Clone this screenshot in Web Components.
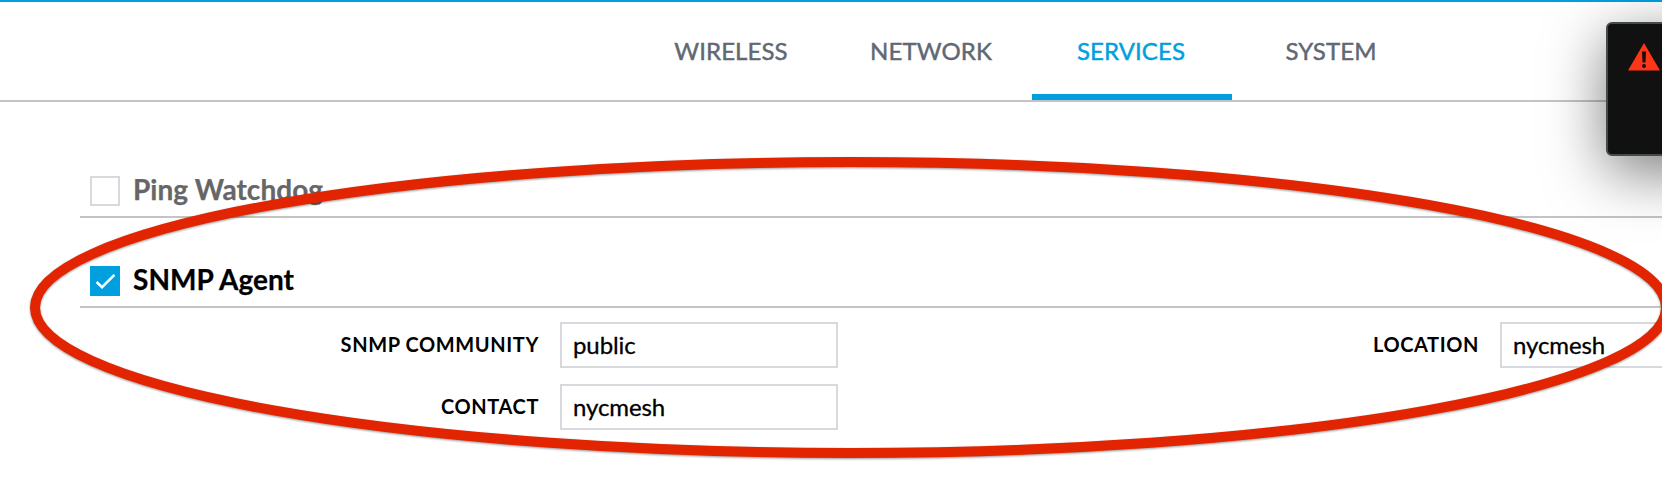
<!DOCTYPE html>
<html lang="en">
<head>
<meta charset="utf-8">
<title>Services</title>
<style>
html,body{margin:0;height:100%;overflow:hidden;background:#fff}
body{font-family:Lato,"Liberation Sans",sans-serif}
</style>
</head>
<body>
<services-page></services-page>
<script>
const define = (name, html) => {
  const t = document.createElement('template');
  t.innerHTML = html;
  customElements.define(name, class extends HTMLElement {
    constructor() {
      super();
      this.attachShadow({mode: 'open'}).appendChild(t.content.cloneNode(true));
    }
  });
};

define('nav-tab', `<style>
:host{display:flex;box-sizing:border-box;width:200px;height:98px;padding:5px 2px 0 0;align-items:center;justify-content:center;border-bottom:6px solid transparent;font-size:24px;line-height:30px;color:#5f6873;letter-spacing:.1px;-webkit-text-stroke:.45px currentColor}
:host([active]){color:#00a0df;border-color:#00a0df}
</style><slot></slot>`);

define('nav-bar', `<style>
:host{display:flex;justify-content:center;box-sizing:border-box;height:102px;border-top:2px solid #00a0df;border-bottom:2px solid #c4c4c4}
nav{display:flex;margin-left:402px}
</style><nav><slot></slot></nav>`);

define('check-box', `<style>
:host{display:block;box-sizing:border-box;width:30px;height:30px;border:2px solid #d6dadf;background:#fff}
svg{display:none}
:host([checked]){border:0;background:#00a0df}
:host([checked]) svg{display:block}
</style><svg width="30" height="30" viewBox="0 0 30 30"><path d="M6.6 16 12 21.2 24.4 8.8" fill="none" stroke="#fff" stroke-width="2.5"/></svg>`);

define('section-head', `<style>
:host{display:flex;box-sizing:border-box;height:90px;padding:0 0 10px 10px;gap:13px;align-items:flex-end;border-bottom:2px solid #c4c4c4;color:#666}
:host([on]){color:#000}
h2{margin:0;font-size:28px;font-weight:700;line-height:34px;letter-spacing:.03px;-webkit-text-stroke:.25px currentColor}
</style><slot name="box"></slot><h2><slot></slot></h2>`);

define('form-field', `<style>
:host{display:grid;grid-template-columns:1fr 278px;column-gap:21px;align-items:center;height:46px}
label{text-align:right;font-size:20px;font-weight:700;line-height:24px;color:#000;padding-bottom:2px;letter-spacing:.6px}
div{box-sizing:border-box;height:46px;border:2px solid #d6dadf;background:#fff;padding:0 11px;font-size:24px;line-height:41px;color:#000;letter-spacing:-.1px;-webkit-text-stroke:.3px currentColor}
</style><label><slot name="label"></slot></label><div><slot></slot></div>`);

define('alert-toast', `<style>
:host{position:absolute;left:1606px;top:22px;display:block;box-sizing:border-box;width:400px;height:134px;border:2px solid #434a4e;border-radius:6px;background:#111;box-shadow:0 16px 60px rgba(0,0,0,.52);padding:19px 20px}
svg{display:block}
</style><svg width="32" height="28" viewBox="0 0 32 28"><path d="M16 0 32 27.5H0Z" fill="#ff3517"/><path d="M14 8.5h4l-.5 11h-3z" fill="#111"/><circle cx="16" cy="23" r="2" fill="#111"/></svg>`);

define('red-ellipse', `<style>
:host{position:absolute;left:0;top:0;display:block}
svg{display:block;filter:drop-shadow(0 1.5px 1.2px rgba(0,0,0,.42))}
</style><svg width="1662" height="486"><ellipse cx="850.5" cy="307.5" rx="815.5" ry="145.5" fill="none" stroke="#e22400" stroke-width="10"/></svg>`);

define('services-page', `<style>
:host{display:block;position:relative;width:1662px;height:486px;overflow:hidden;background:#fff}
main{padding:26px 0 0 80px}
.fields{display:grid;grid-template-columns:758px 940px;row-gap:16px;padding-top:14px}
</style>
<nav-bar><nav-tab>WIRELESS</nav-tab><nav-tab>NETWORK</nav-tab><nav-tab active>SERVICES</nav-tab><nav-tab>SYSTEM</nav-tab></nav-bar>
<main>
<section-head><check-box slot="box"></check-box>Ping Watchdog</section-head>
<section-head on><check-box slot="box" checked></check-box>SNMP Agent</section-head>
<div class="fields">
<form-field><span slot="label">SNMP COMMUNITY</span>public</form-field>
<form-field><span slot="label">LOCATION</span>nycmesh</form-field>
<form-field><span slot="label">CONTACT</span>nycmesh</form-field>
</div>
</main>
<alert-toast></alert-toast>
<red-ellipse></red-ellipse>`);
</script>
</body>
</html>
